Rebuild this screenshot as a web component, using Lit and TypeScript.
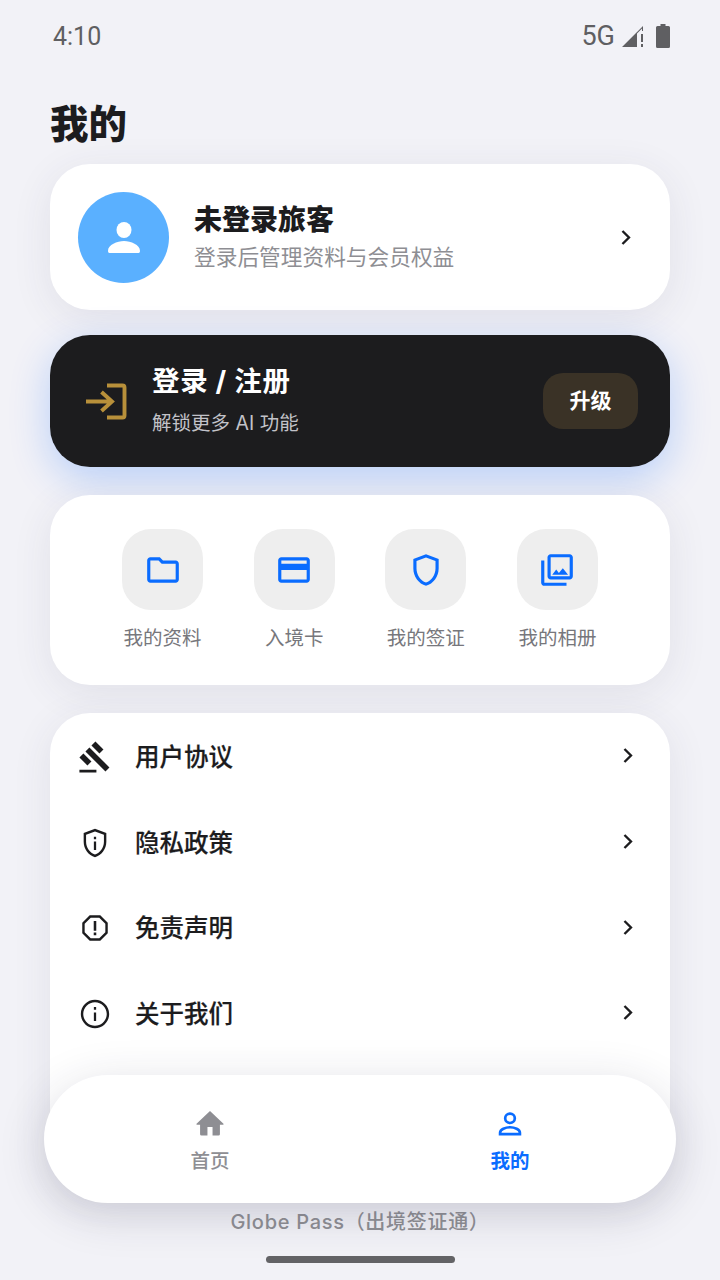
import { LitElement, html, css, svg } from "lit";
import { customElement } from "lit/decorators.js";

const chevron = html`<svg class="chev" viewBox="0 0 24 24"><path d="M9.300 6.200 15.100 12l-5.800 5.800" fill="none" stroke="currentColor" stroke-width="2.100"/></svg>`;

const quick = [
  { label: "我的资料", icon: svg`<path d="M20 6h-8l-2-2H4c-1.100 0-2 .9-2 2v12c0 1.100.9 2 2 2h16c1.100 0 2-.9 2-2V8c0-1.100-.9-2-2-2zm0 12H4V6h5.170l2 2H20v10z"/>` },
  { label: "入境卡", icon: svg`<path d="M20 4H4c-1.110 0-2 .89-2 2v12c0 1.110.89 2 2 2h16c1.110 0 2-.89 2-2V6c0-1.110-.89-2-2-2zm0 14H4v-6h16v6zm0-10H4V6h16v2z"/>` },
  { label: "我的签证", icon: svg`<path d="M12 2 4 5v6.090c0 5.050 3.410 9.760 8 10.910 4.590-1.150 8-5.860 8-10.910V5l-8-3zm6 9.090c0 4-2.550 7.700-6 8.830-3.450-1.130-6-4.820-6-8.830v-4.700l6-2.250 6 2.250v4.700z"/>` },
  { label: "我的相册", icon: svg`<path d="M20 4v12H8V4h12m0-2H8c-1.100 0-2 .9-2 2v12c0 1.100.9 2 2 2h12c1.100 0 2-.9 2-2V4c0-1.100-.9-2-2-2zm-8.500 9.670 1.690 2.260 2.480-3.100L19 15H9l2.500-3.330zM2 6v14c0 1.100.9 2 2 2h14v-2H4V6H2z"/>` },
];

const menu = [
  { label: "用户协议", icon: svg`<path d="M1 21h12v2H1v-2zM5.240 8.070l2.830-2.830 14.140 14.140-2.830 2.830L5.240 8.070zM12.320 1l5.660 5.660-2.830 2.830-5.660-5.660L12.320 1zM3.830 9.480l5.660 5.660-2.830 2.830L1 12.310l2.830-2.830z"/>` },
  { label: "隐私政策", icon: svg`<path d="M12 2 4 5v6.090c0 5.050 3.410 9.760 8 10.910 4.590-1.150 8-5.860 8-10.910V5l-8-3zm6.300 9.090c0 4.100-2.700 7.850-6.300 9.050-3.600-1.200-6.300-4.950-6.300-9.050V6.200L12 3.850l6.300 2.350v4.890z"/><path d="M11.200 7.500h1.600v1.800h-1.600zM11.200 11h1.600v6h-1.600z"/>` },
  { label: "免责声明", icon: svg`<path d="M15.730 3H8.270L3 8.270v7.460L8.270 21h7.460L21 15.730V8.270L15.730 3zm3.570 12L15 19.300H9L4.700 15V9L9 4.700h6L19.300 9v6z"/><path d="M11.100 7h1.800v7h-1.800zM11.100 15.200h1.800v2h-1.800z"/>` },
  { label: "关于我们", icon: svg`<path d="M11.200 7h1.600v2h-1.600zm0 4h1.600v6h-1.600zM12 2C6.480 2 2 6.480 2 12s4.480 10 10 10 10-4.480 10-10S17.520 2 12 2zm0 18.300c-4.580 0-8.300-3.720-8.300-8.300S7.420 3.700 12 3.700s8.300 3.720 8.300 8.300-3.720 8.300-8.300 8.300z"/>` },
];

@customElement("app-root")
export class AppRoot extends LitElement {
  static styles = css`
    :host {
      display: block;
      width: 720px;
      height: 1280px;
      overflow: hidden;
      position: relative;
      background: #f2f2f7;
      font-family: Inter, "Noto Sans CJK SC", sans-serif;
      color: #1c1c1e;
    }
    .page { height: 1280px; display: flex; flex-direction: column; padding: 0 50px; box-sizing: border-box; overflow: hidden; }
    .status { height: 72px; flex: none; margin: 0 0 0 3px; display: flex; align-items: center; justify-content: space-between; color: #5f5f62; font: 400 25px Roboto, sans-serif; }
    .status-r { display: flex; align-items: center; gap: 7px; font-size: 27px; }
    .status-r svg { display: block; fill: #5f5f62; }
    .status-r .batt { margin-left: 5px; }
    h1 { margin: 0; height: 92px; flex: none; box-sizing: border-box; padding-top: 26px; font-size: 38.400px; line-height: 52px; font-weight: 900; }
    .card { background: #fff; border-radius: 40px; box-shadow: 0 8px 40px rgba(60, 60, 90, 0.09); flex: none; }
    .profile { height: 146px; box-sizing: border-box; padding: 0 31px 0 28px; display: flex; align-items: center; gap: 25px; }
    .avatar { width: 91px; height: 91px; border-radius: 50%; background: #5ab0ff; display: flex; align-items: center; justify-content: center; flex: none; }
    .avatar svg { width: 44px; height: 44px; fill: #fff; }
    .info { flex: 1; display: flex; flex-direction: column; gap: 3px; }
    .info b { font-size: 28px; line-height: 38px; font-weight: 900; margin-top: -1px; }
    .info span { font-size: 21.700px; line-height: 30px; color: #8e8e93; }
    .chev { width: 27px; height: 27px; display: block; flex: none; color: #1c1c1e; }
    .login { margin-top: 25px; height: 132px; flex: none; box-sizing: border-box; padding: 0 32px 0 34px; border-radius: 40px; background: #1c1c1e; display: flex; align-items: center; box-shadow: 0 12px 40px rgba(0, 98, 255, 0.24); color: #fff; }
    .login > svg { width: 47px; height: 47px; flex: none; margin-right: 21px; }
    .login-t { flex: 1; display: flex; flex-direction: column; gap: 9px; }
    .login-t b { font-size: 27.500px; line-height: 38px; font-weight: 700; letter-spacing: 0.7px; margin-top: -4px; }
    .login-t span { font-size: 19.500px; line-height: 28px; color: #c2c2c8; }
    .upgrade { width: 95px; height: 56px; border-radius: 20px; background: #3a3226; display: flex; align-items: center; justify-content: center; font-size: 21px; line-height: 26px; font-weight: 700; }
    .quick { margin-top: 28px; height: 190px; box-sizing: border-box; padding: 34px 72px 0; display: grid; grid-template-columns: repeat(4, 81px); justify-content: space-between; }
    .q { display: flex; flex-direction: column; align-items: center; gap: 14px; width: 81px; }
    .tile { width: 81px; height: 81px; border-radius: 29px; background: #eeeeee; display: flex; align-items: center; justify-content: center; }
    .tile svg { width: 38px; height: 38px; fill: #0a6cff; }
    .q span { font-size: 19.500px; line-height: 28px; color: #77777c; white-space: nowrap; }
    .menu { margin-top: 28px; height: 480px; padding-top: 1px; box-sizing: border-box; }
    .row { height: 85.700px; display: flex; align-items: center; padding: 0 29px 0 27px; }
    .row > svg:first-child { width: 34px; height: 34px; fill: #1c1c1e; margin: 0 23px 0 1px; flex: none; }
    .row span { flex: 1; font-size: 24.500px; font-weight: 500; -webkit-text-stroke: 0.2px #1c1c1e; line-height: 34px; }
    .row .chev { margin-top: -2px; }
    .nav { position: absolute; left: 44px; top: 1075px; width: 632px; height: 128px; border-radius: 64px; background: #fff; box-shadow: 0 10px 48px rgba(40, 40, 70, 0.16); display: grid; grid-template-columns: 1fr 1fr; padding: 0 16px; box-sizing: border-box; }
    .tab { display: flex; flex-direction: column; align-items: center; padding-top: 32px; color: #8e8e93; font-size: 19.500px; line-height: 28px; font-weight: 500; }
    .tab svg { width: 34px; height: 34px; fill: currentColor; margin-bottom: 6px; }
    .tab.on { color: #0a6cff; font-weight: 700; }
    .tab.on svg { fill: none; stroke: currentColor; stroke-width: 1.900; }
    .foot { position: absolute; left: 0; right: 0; top: 1207px; text-align: center; font-size: 20px; line-height: 30px; font-weight: 500; color: #8e8e93; letter-spacing: 0.7px; }
    .bar { position: absolute; left: 266px; top: 1256px; width: 189px; height: 7px; border-radius: 4px; background: #636366; }
  `;

  render() {
    return html`
      <div class="page">
        <div class="status">
          <span>4:10</span>
          <div class="status-r">
            <span>5G</span>
            <svg width="22" height="24" viewBox="0 0 22 24"><path d="M0 23 15 8v15zM15 8l6-6v5h-1V4.500l-5 5z"/><rect x="19" y="10" width="2" height="8"/><rect x="19" y="20" width="2" height="3"/></svg>
            <svg class="batt" width="14" height="24" viewBox="0 0 14 24"><path d="M4.500 0h5v2h3A1.500 1.500 0 0 1 14 3.500V22.500A1.500 1.500 0 0 1 12.500 24H1.500A1.500 1.500 0 0 1 0 22.500V3.500A1.500 1.500 0 0 1 1.500 2h3z"/></svg>
          </div>
        </div>
        <h1>我的</h1>

        <section class="card profile">
          <div class="avatar"><svg viewBox="0 0 24 24"><ellipse cx="12" cy="8.200" rx="4.100" ry="4.400"/><path d="M4 20.700a.8.8 0 0 1-.7-.8v-.5c0-3 5-5.200 8.700-5.200s8.700 2.200 8.700 5.200v.5a.8.8 0 0 1-.7.8z"/></svg></div>
          <div class="info"><b>未登录旅客</b><span>登录后管理资料与会员权益</span></div>
          ${chevron}
        </section>

        <section class="login">
          <svg viewBox="0 0 47 47" fill="none" stroke="#b8903a" stroke-width="3.900"><path d="M23 7.500h15.500a2 2 0 0 1 2 2v28a2 2 0 0 1-2 2H23M2 23.500h26M17.500 14l10.500 9.500-10.500 9.500"/></svg>
          <div class="login-t"><b>登录 / 注册</b><span>解锁更多 AI 功能</span></div>
          <div class="upgrade">升级</div>
        </section>

        <section class="card quick">
          ${quick.map((q) => html`<div class="q"><div class="tile"><svg viewBox="0 0 24 24">${q.icon}</svg></div><span>${q.label}</span></div>`)}
        </section>

        <section class="card menu">
          ${menu.map((m) => html`<div class="row"><svg viewBox="0 0 24 24">${m.icon}</svg><span>${m.label}</span>${chevron}</div>`)}
        </section>
      </div>

      <div class="foot">Globe Pass（出境签证通）</div>
      <nav class="nav">
        <div class="tab"><svg viewBox="0 0 24 24"><path d="M10.200 20.200v-6h3.600v6h4.200a1 1 0 0 0 1-1v-6.700h2.200a.4.4 0 0 0 .3-.7L12 2.800l-9.500 9a.4.4 0 0 0 .3.7H5v6.700a1 1 0 0 0 1 1z"/></svg>首页</div>
        <div class="tab on"><svg viewBox="0 0 24 24"><ellipse cx="12" cy="8" rx="3.400" ry="3.300"/><path d="M5 19.200v-1c0-2.400 3.900-3.900 7-3.900s7 1.500 7 3.900v1z"/></svg>我的</div>
      </nav>
      <div class="bar"></div>
    `;
  }
}
